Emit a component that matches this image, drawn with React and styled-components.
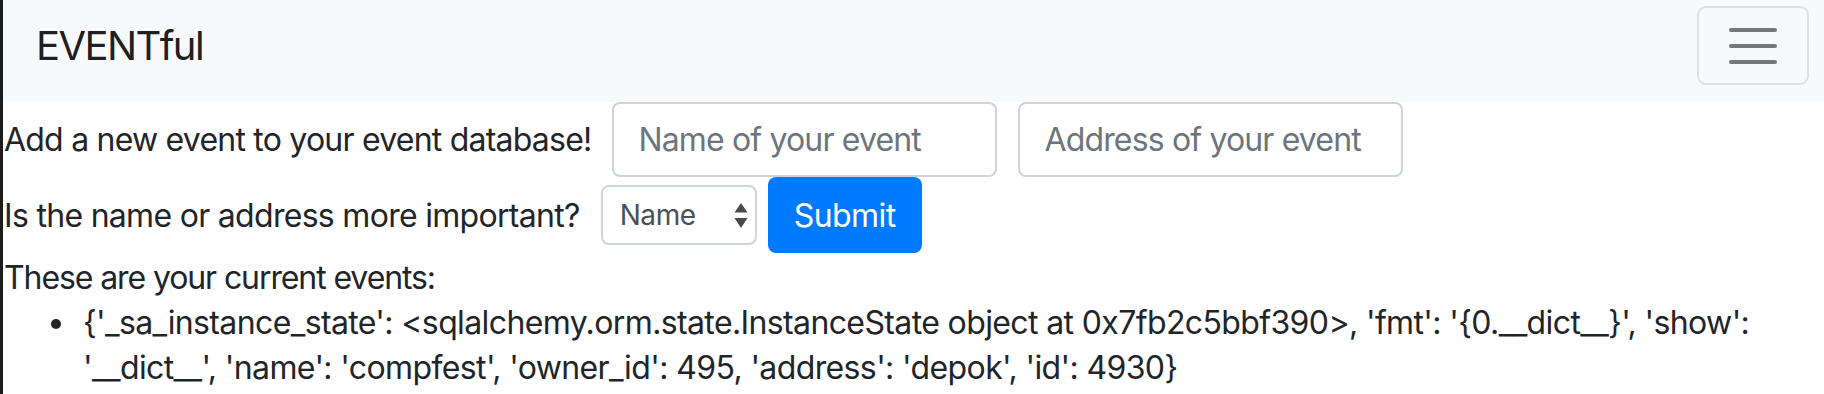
import styled, { createGlobalStyle } from "styled-components";

const GlobalStyle = createGlobalStyle`
  * {
    box-sizing: border-box;
  }

  body {
    margin: 0;
    background: #fff;
    font-family: Inter, "Noto Sans", "Liberation Sans", sans-serif;
    font-size: 32px;
    line-height: 45px;
    color: #212529;
  }
`;

const events = [
  "{'_sa_instance_state': <sqlalchemy.orm.state.InstanceState object at 0x7fb2c5bbf390>, 'fmt': '{0.__dict__}', 'show': '__dict__', 'name': 'compfest', 'owner_id': 495, 'address': 'depok', 'id': 4930}",
];

export default function App() {
  return (
    <>
      <GlobalStyle />
      <Page>
        <Navbar>
          <Brand href="#">EVENTful</Brand>
          <Toggler type="button" aria-label="Toggle navigation">
            <svg width="48" height="36" viewBox="0 0 48 36">
              <g stroke="#73787c" strokeWidth="4" strokeLinecap="round">
                <line x1="2" y1="2" x2="46" y2="2" />
                <line x1="2" y1="18" x2="46" y2="18" />
                <line x1="2" y1="34" x2="46" y2="34" />
              </g>
            </svg>
          </Toggler>
        </Navbar>

        <FormRow>
          <Label $spacing={-0.78}>Add a new event to your event database!</Label>
          <TextInput placeholder="Name of your event" />
          <TextInput placeholder="Address of your event" />
        </FormRow>

        <FormRow>
          <Label $spacing={-0.7}>Is the name or address more important?</Label>
          <Controls>
            <SelectBox>
              <Select defaultValue="name">
                <option value="name">Name</option>
                <option value="address">Address</option>
              </Select>
              <SelectArrows width="14" height="25" viewBox="0 0 14 25">
                <path d="M7 0 L13.5 9.5 H0.5 Z" fill="#4a4a4a" />
                <path d="M7 25 L13.5 15 H0.5 Z" fill="#4a4a4a" />
              </SelectArrows>
            </SelectBox>
            <SubmitButton type="button">Submit</SubmitButton>
          </Controls>
        </FormRow>

        <Heading>These are your current events:</Heading>
        <EventList>
          {events.map((v, i) => (
            <EventItem key={i}>{v}</EventItem>
          ))}
        </EventList>
      </Page>
    </>
  );
}

const Page = styled.div`
  min-height: 394px;
  border-left: 3px solid #1c1c1c;
`;

const Navbar = styled.nav`
  display: flex;
  justify-content: space-between;
  align-items: center;
  height: 102px;
  padding: 6px 15px 17px 33px;
  background: #f8f9fa;
`;

const Brand = styled.a`
  font-size: 40px;
  line-height: 60px;
  color: rgba(0, 0, 0, 0.9);
  text-decoration: none;
  letter-spacing: -1.6px;
`;

const Toggler = styled.button`
  display: flex;
  align-items: center;
  justify-content: center;
  width: 112px;
  height: 79px;
  padding: 0;
  background: transparent;
  border: 2px solid rgba(0, 0, 0, 0.1);
  border-radius: 9px;
`;

const FormRow = styled.div`
  display: flex;
  align-items: center;
  gap: 21px;
`;

const Label = styled.label`
  padding-left: 1px;
  letter-spacing: ${(p) => p.$spacing}px;
  white-space: nowrap;
`;

const Controls = styled.div`
  display: flex;
  align-items: center;
  gap: 11px;
`;

const TextInput = styled.input`
  width: 385px;
  height: 75px;
  padding: 0 24px;
  font: inherit;
  letter-spacing: -0.85px;
  color: #495057;
  background: #fff;
  border: 2px solid #ced4da;
  border-radius: 8px;
  outline: none;

  &::placeholder {
    color: #6c757d;
  }
`;

const SelectBox = styled.div`
  position: relative;
  width: 156px;
  height: 60px;
`;

const Select = styled.select`
  appearance: none;
  width: 100%;
  height: 100%;
  padding: 0 0 0 17px;
  font-family: inherit;
  font-size: 28px;
  letter-spacing: -0.4px;
  color: #495057;
  background: #fff;
  border: 2px solid #ced4da;
  border-radius: 8px;
  outline: none;
`;

const SelectArrows = styled.svg`
  position: absolute;
  top: 18px;
  right: 9px;
  pointer-events: none;
`;

const SubmitButton = styled.button`
  width: 154px;
  height: 76px;
  padding: 0;
  font: inherit;
  letter-spacing: -0.55px;
  color: #fff;
  background: #007bff;
  border: none;
  border-radius: 8px;
`;

const Heading = styled.p`
  margin: 2px 0 0;
  padding-left: 1px;
  letter-spacing: -1.1px;
`;

const EventList = styled.ul`
  margin: 0;
  padding-left: 80px;
  list-style: none;
  letter-spacing: -0.62px;
`;

const EventItem = styled.li`
  position: relative;

  &::before {
    content: "";
    position: absolute;
    top: 19px;
    left: -32px;
    width: 10px;
    height: 10px;
    border-radius: 50%;
    background: #212529;
  }
`;
